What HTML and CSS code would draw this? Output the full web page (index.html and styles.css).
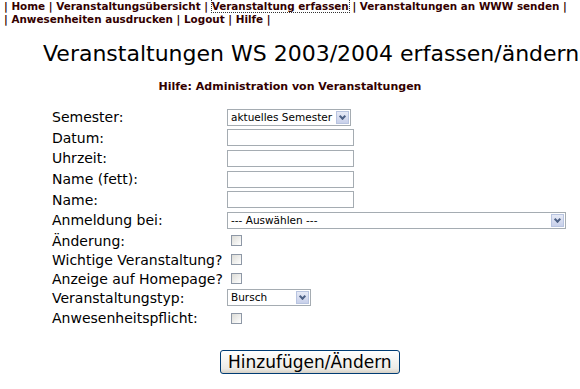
FILE: index.html
```html
<!DOCTYPE html>
<html lang="de">

<head>
    <meta charset="UTF-8">
    <title>Veranstaltungen erfassen</title>
    <link rel="stylesheet" href="styles.css">
</head>

<body>
    <!-- Navigation -->
    <div class="nav">
        | <a href="#">Home</a> | <a href="#">Veranstaltungsübersicht</a> | <a href="#" class="current">Veranstaltung erfassen</a> | <a href="#">Veranstaltungen an WWW senden</a> |
        <br>| <a href="#">Anwesenheiten ausdrucken</a> | <a href="#">Logout</a> | <a href="#">Hilfe</a> |
    </div>

    <h1>Veranstaltungen WS 2003/2004 erfassen/ändern</h1>
    <p class="help"><a href="#">Hilfe: Administration von Veranstaltungen</a></p>

    <!-- Formular -->
    <form class="event-form">
        <table>
            <tr>
                <td class="label">Semester:</td>
                <td>
                    <span class="select sel-semester">aktuelles Semester<span class="arrow"></span></span>
                </td>
            </tr>
            <tr>
                <td class="label">Datum:</td>
                <td><input type="text" class="field"></td>
            </tr>
            <tr>
                <td class="label">Uhrzeit:</td>
                <td><input type="text" class="field"></td>
            </tr>
            <tr>
                <td class="label">Name (fett):</td>
                <td><input type="text" class="field"></td>
            </tr>
            <tr>
                <td class="label">Name:</td>
                <td><input type="text" class="field"></td>
            </tr>
            <tr>
                <td class="label">Anmeldung bei:</td>
                <td>
                    <span class="select sel-wide">--- Auswählen ---<span class="arrow"></span></span>
                </td>
            </tr>
            <tr class="check-row">
                <td class="label">Änderung:</td>
                <td><span class="check"></span></td>
            </tr>
            <tr class="check-row">
                <td class="label">Wichtige Veranstaltung?</td>
                <td><span class="check"></span></td>
            </tr>
            <tr class="check-row">
                <td class="label">Anzeige auf Homepage?</td>
                <td><span class="check"></span></td>
            </tr>
            <tr>
                <td class="label">Veranstaltungstyp:</td>
                <td>
                    <span class="select sel-type">Bursch<span class="arrow"></span></span>
                </td>
            </tr>
            <tr class="check-row">
                <td class="label">Anwesenheitspflicht:</td>
                <td><span class="check"></span></td>
            </tr>
        </table>
        <div class="submit-row">
            <button type="button">Hinzufügen/Ändern</button>
        </div>
    </form>
</body>

</html>
```

FILE: styles.css
```css
body {
    margin: 0;
    padding: 0;
    background-color: #fff;
    font-family: "DejaVu Sans", Verdana, sans-serif;
    color: #000;
}

a {
    color: inherit;
    text-decoration: none;
}

.nav {
    padding: 0 0 0 4px;
    font-size: 10.4px;
    font-weight: bold;
    line-height: 13px;
    white-space: nowrap;
    color: #330000;
}

.nav a.current {
    outline: 1px dotted #333;
}

h1 {
    margin: 15px 0 0 0;
    padding-left: 43px;
    font-size: 22px;
    font-weight: normal;
    line-height: 26px;
    white-space: nowrap;
}

.help {
    margin: 13px 0 0 0;
    text-align: center;
    font-size: 11px;
    font-weight: bold;
    line-height: 13px;
    color: #330000;
}

.event-form {
    margin: 14px 0 0 50px;
}

.event-form table {
    border-collapse: collapse;
}

.event-form td {
    padding: 1px 2px;
    height: 18.6px;
    font-size: 14px;
    vertical-align: middle;
}

.event-form tr.check-row td {
    height: 18px;
    padding: 1px 2px 0;
}

.event-form td.label {
    width: 171px;
    white-space: nowrap;
}

.field {
    display: block;
    width: 127px;
    height: 17px;
    margin: 0;
    padding: 0 2px;
    border: 1px solid #a5acb2;
    box-sizing: border-box;
    font: inherit;
}

.select {
    position: relative;
    display: block;
    height: 17px;
    padding: 0 0 0 3px;
    border: 1px solid #a5acb2;
    box-sizing: border-box;
    font-size: 10.5px;
    line-height: 15px;
    white-space: nowrap;
    color: #000;
}

.sel-semester {
    width: 124px;
}

.sel-wide {
    width: 339px;
}

.sel-type {
    width: 84px;
}

.arrow {
    position: absolute;
    top: 1px;
    right: 1px;
    width: 13px;
    height: 13px;
    border: 1px solid #b8c4e0;
    box-sizing: border-box;
    background: linear-gradient(#e6eaf6, #c8d0ea);
}

.arrow::after {
    content: "";
    position: absolute;
    left: 3px;
    top: 2px;
    width: 3px;
    height: 3px;
    border-right: 2px solid #4d6185;
    border-bottom: 2px solid #4d6185;
    transform: rotate(45deg);
}

.check {
    display: block;
    width: 11px;
    height: 11px;
    margin-left: 4px;
    border: 1px solid #8e98a6;
    box-sizing: border-box;
    background: linear-gradient(135deg, #dcdcd7, #fff);
}

.submit-row {
    padding: 23px 0 0 170px;
}

.submit-row button {
    height: 24px;
    padding: 0 7px;
    border: 1px solid #003c74;
    border-radius: 3px;
    background: linear-gradient(#fff, #ecebe6 80%, #d6d0c5);
    font-family: "DejaVu Sans", Verdana, sans-serif;
    font-size: 17px;
    line-height: 20px;
    color: #000;
}
```
